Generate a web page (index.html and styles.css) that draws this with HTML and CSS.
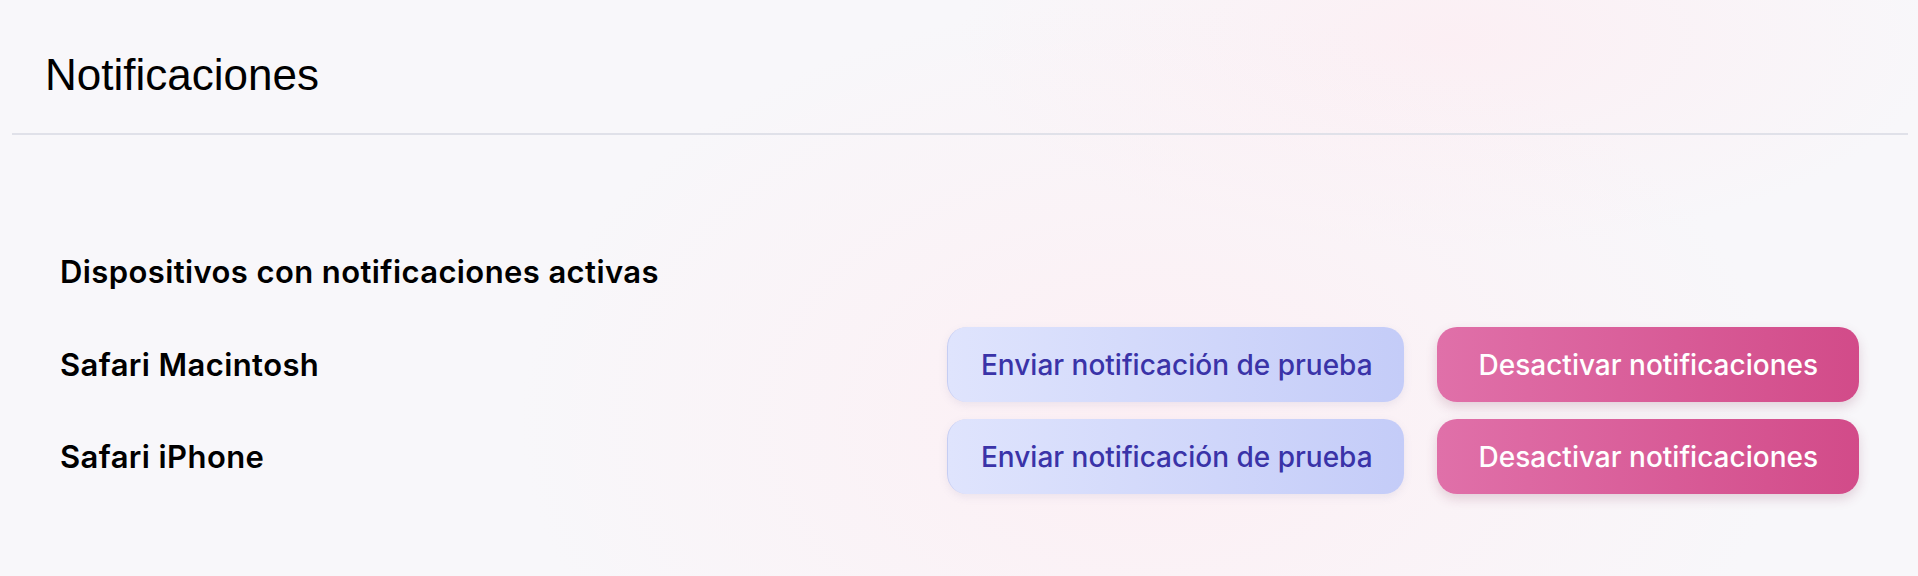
FILE: index.html
```html
<!DOCTYPE html>
<html>
    <head>
        <meta charset = utf-8>
        <meta name = viewport content = 'width = device-width, initial-scale = 1'>
        <title>Notificaciones</title>

        <link rel="stylesheet" href="styles.css">
    </head>

    <body>
        <div class = panel>
            <div class = header>
                <h1 class = title>Notificaciones</h1>
            </div>

            <div class = content>
                <h2 class = subtitle>Dispositivos con notificaciones activas</h2>

                <div class = device>
                    <span class = name>Safari Macintosh</span>
                    <div class = actions>
                        <button class = "btn test">Enviar notificación de prueba</button>
                        <button class = "btn off">Desactivar notificaciones</button>
                    </div>
                </div>

                <div class = device>
                    <span class = name>Safari iPhone</span>
                    <div class = actions>
                        <button class = "btn test">Enviar notificación de prueba</button>
                        <button class = "btn off">Desactivar notificaciones</button>
                    </div>
                </div>
            </div>
        </div>
    </body>
</html>
```

FILE: styles.css
```css
html {
    background-color: #f8f7fa;
    background-image:
        radial-gradient(ellipse 900px 600px at 1150px 420px, rgba(253, 238, 243, 0.9), rgba(253, 238, 243, 0) 70%),
        radial-gradient(ellipse 700px 300px at 1450px 40px, rgba(252, 238, 243, 0.9), rgba(252, 238, 243, 0) 70%);
    min-height: 100%;
}

body {
    margin: 0;
    font-family: Inter, "Noto Sans", sans-serif;
    color: #000;
}

.panel {
    margin: 0 10px 0 12px
}

.header {
    padding: 49px 33px 32px;
    border-bottom: 2px solid #e0e1e9
}

.title {
    margin: 0;
    font-family: "Liberation Sans", Arial, sans-serif;
    font-size: 44px;
    font-weight: 400;
    line-height: 52px
}

.content {
    padding: 118px 49px 0 48px
}

.subtitle {
    margin: 0 0 36px;
    font-size: 31px;
    font-weight: 600;
    letter-spacing: 0.4px;
    line-height: 38px
}

.device {
    display: flex;
    align-items: center;
    justify-content: space-between;
    margin-bottom: 17px
}

.name {
    font-size: 31px;
    font-weight: 600;
    letter-spacing: 0.4px;
    line-height: 38px
}

.actions {
    display: flex;
    gap: 33px
}

.btn {
    height: 75px;
    padding: 0 31px 0 33px;
    border: none;
    border-radius: 20px;
    font-family: Inter, sans-serif;
    font-size: 28px;
    font-weight: 500;
    cursor: pointer
}

.test {
    color: #3a33a8;
    background: linear-gradient(90deg, #dfe4fd, #c4ccf8);
    border-left: 1px solid #c5cdf3;
    box-shadow: 0 3px 8px rgba(120, 120, 170, 0.12)
}

.off {
    padding: 0 41px 0 42px;
    color: #fff;
    background: linear-gradient(90deg, #e070a9, #d24b89);
    box-shadow: 0 5px 12px rgba(120, 40, 80, 0.18)
}

.btn:hover {filter: brightness(0.97)}
```
